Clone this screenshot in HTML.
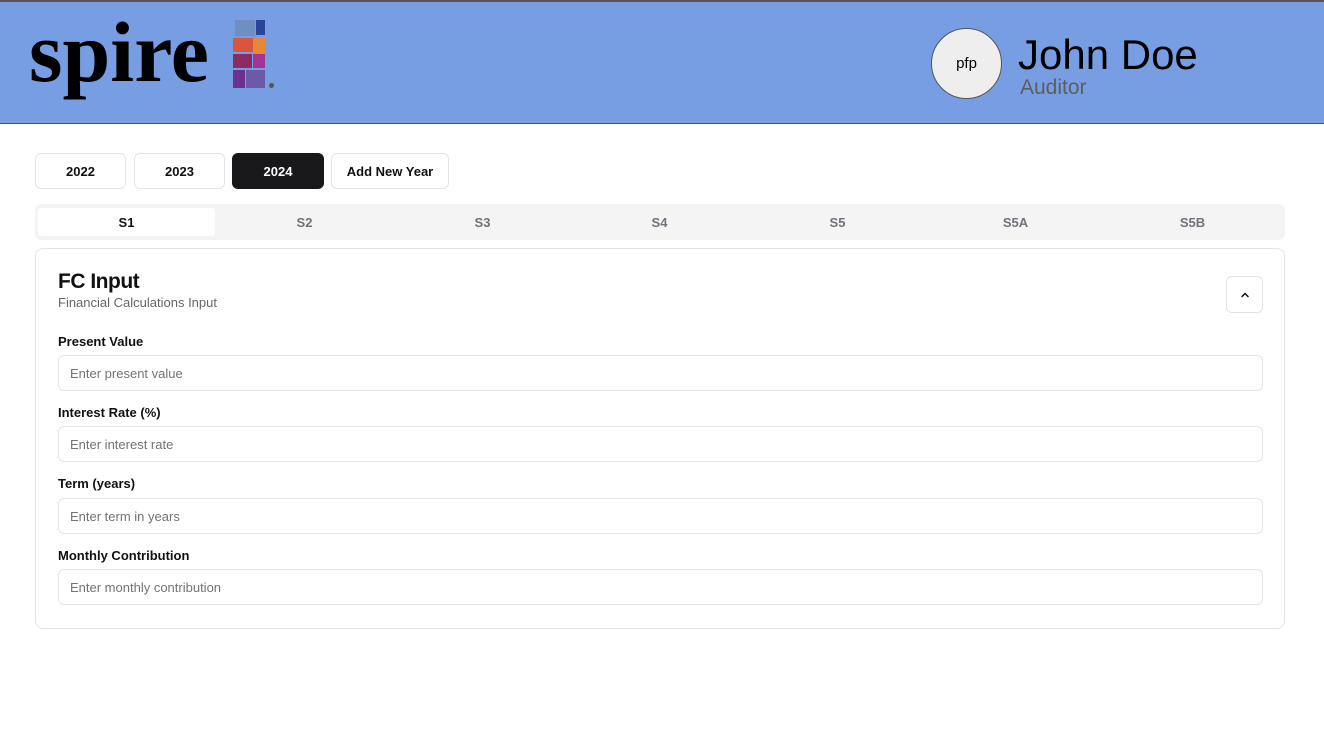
<!DOCTYPE html>
<html><head><style>
*{box-sizing:border-box;margin:0;padding:0}
body{width:1324px;height:756px;background:#fff;font-family:"Liberation Sans",sans-serif;position:relative;overflow:hidden}
.hdr{position:absolute;left:0;top:0;width:1324px;height:124px;background:#779ee3;border-top:2px solid #555;border-bottom:1px solid #555}
.logo{position:absolute;left:29px;top:7px;font-family:"Liberation Serif",serif;font-weight:bold;font-size:86px;letter-spacing:0px;line-height:86px;color:#000}
.sq{position:absolute}
.pfp{position:absolute;left:931px;top:26px;width:71px;height:71px;border-radius:50%;background:#eee;border:1.5px solid #555;display:flex;align-items:center;justify-content:center;font-size:15px;color:#000}
.name{position:absolute;left:1018px;top:29px;font-size:42px;color:#000}
.role{position:absolute;left:1020px;top:74px;font-size:21px;color:#5d5d5d}
.yb{position:absolute;top:153px;height:36px;border:1px solid #e4e4e7;border-radius:6px;background:#fff;font-size:13px;font-weight:bold;color:#111;display:flex;align-items:center;justify-content:center}
.tabs{position:absolute;left:35px;top:204px;width:1250px;height:36px;background:#f4f4f5;border-radius:6px}
.tab{position:absolute;top:4px;height:28px;width:177px;display:flex;align-items:center;justify-content:center;font-size:13px;font-weight:bold;color:#71717a}
.tab.on{background:#fff;color:#111;border-radius:3px}
.card{position:absolute;left:35px;top:248px;width:1250px;height:381px;border:1px solid #e4e4e7;border-radius:8px}
.lbl{position:absolute;left:58px;font-size:13px;font-weight:bold;color:#111}
.inp{position:absolute;left:58px;width:1205px;height:36px;border:1px solid #e4e4e7;border-radius:6px;font-size:13px;color:#737373;padding-left:11px;display:flex;align-items:center}
</style></head><body>
<div class="hdr">
<div class="logo">spire</div>
<div class="sq" style="left:235px;top:18px;width:20px;height:16px;background:#6f8fc3"></div>
<div class="sq" style="left:256px;top:18px;width:9px;height:15px;background:#2a449a"></div>
<div class="sq" style="left:233px;top:36px;width:20px;height:14px;background:#d9553f"></div>
<div class="sq" style="left:254px;top:35px;width:11px;height:16px;background:#e88836"></div>
<div class="sq" style="left:233px;top:52px;width:19px;height:14px;background:#8c2a62"></div>
<div class="sq" style="left:253px;top:52px;width:12px;height:14px;background:#a33395"></div>
<div class="sq" style="left:233px;top:68px;width:12px;height:18px;background:#6a3290"></div>
<div class="sq" style="left:246px;top:68px;width:19px;height:18px;background:#6a5aa8"></div>
<div class="sq" style="left:269px;top:81px;width:5px;height:5px;border-radius:50%;background:#555"></div>
<div class="pfp">pfp</div>
<div class="name">John Doe</div>
<div class="role">Auditor</div>
</div>
<div class="yb" style="left:35px;width:91px">2022</div>
<div class="yb" style="left:134px;width:91px">2023</div>
<div class="yb" style="left:232px;width:92px;background:#18181b;border-color:#18181b;color:#fff">2024</div>
<div class="yb" style="left:331px;width:118px">Add New Year</div>
<div class="tabs">
<div class="tab on" style="left:3px">S1</div>
<div class="tab" style="left:181px">S2</div>
<div class="tab" style="left:359px">S3</div>
<div class="tab" style="left:536px">S4</div>
<div class="tab" style="left:714px">S5</div>
<div class="tab" style="left:892px">S5A</div>
<div class="tab" style="left:1069px">S5B</div>
</div>
<div class="card"></div>
<div style="position:absolute;left:58px;top:270px;font-size:21px;font-weight:bold;color:#111;letter-spacing:-0.5px">FC Input</div>
<div style="position:absolute;left:58px;top:295px;font-size:13px;color:#666">Financial Calculations Input</div>
<div style="position:absolute;left:1226px;top:276px;width:37px;height:37px;border:1px solid #e4e4e7;border-radius:6px;display:flex;align-items:center;justify-content:center"><svg width="12" height="12" viewBox="0 0 12 12"><path d="M3 7.5L6 4.5L9 7.5" fill="none" stroke="#111" stroke-width="1.5" stroke-linecap="round"/></svg></div>
<div class="lbl" style="top:334px">Present Value</div>
<div class="inp" style="top:355px">Enter present value</div>
<div class="lbl" style="top:405px">Interest Rate (%)</div>
<div class="inp" style="top:426px">Enter interest rate</div>
<div class="lbl" style="top:476px">Term (years)</div>
<div class="inp" style="top:498px">Enter term in years</div>
<div class="lbl" style="top:548px">Monthly Contribution</div>
<div class="inp" style="top:569px">Enter monthly contribution</div>
</body></html>
